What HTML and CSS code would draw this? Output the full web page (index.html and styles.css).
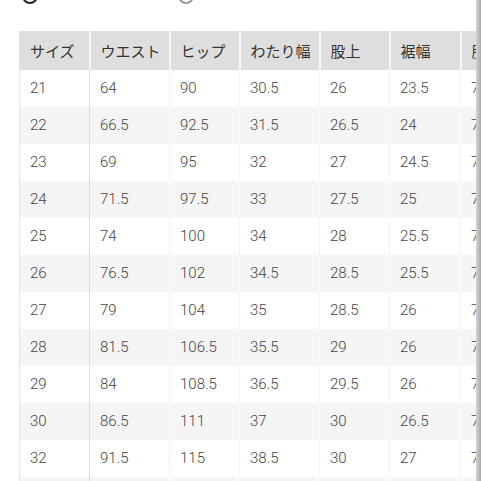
FILE: index.html
```html
<!DOCTYPE html>
<html lang="ja">
<head>
<meta charset="utf-8">
<link rel="stylesheet" href="styles.css">
</head>
<body>
<div class="page">
  <div class="content">
    <div class="radios">
      <div class="radio"><span class="dot on"></span><span class="rlabel">cm</span></div>
      <div class="radio second"><span class="dot"></span><span class="rlabel">inch</span></div>
    </div>
    <div class="table-wrap">
      <table class="sizes">
        <colgroup>
          <col class="c1"><col class="c2"><col class="c3"><col class="c4"><col class="c5"><col class="c6"><col class="c7">
        </colgroup>
        <thead>
          <tr><th>サイズ</th><th>ウエスト</th><th>ヒップ</th><th>わたり幅</th><th>股上</th><th>裾幅</th><th>股下</th></tr>
        </thead>
        <tbody>
          <tr><td>21</td><td>64</td><td>90</td><td>30.5</td><td>26</td><td>23.5</td><td>76</td></tr>
          <tr><td>22</td><td>66.5</td><td>92.5</td><td>31.5</td><td>26.5</td><td>24</td><td>76</td></tr>
          <tr><td>23</td><td>69</td><td>95</td><td>32</td><td>27</td><td>24.5</td><td>76</td></tr>
          <tr><td>24</td><td>71.5</td><td>97.5</td><td>33</td><td>27.5</td><td>25</td><td>76</td></tr>
          <tr><td>25</td><td>74</td><td>100</td><td>34</td><td>28</td><td>25.5</td><td>76</td></tr>
          <tr><td>26</td><td>76.5</td><td>102</td><td>34.5</td><td>28.5</td><td>25.5</td><td>76</td></tr>
          <tr><td>27</td><td>79</td><td>104</td><td>35</td><td>28.5</td><td>26</td><td>76</td></tr>
          <tr><td>28</td><td>81.5</td><td>106.5</td><td>35.5</td><td>29</td><td>26</td><td>76</td></tr>
          <tr><td>29</td><td>84</td><td>108.5</td><td>36.5</td><td>29.5</td><td>26</td><td>76</td></tr>
          <tr><td>30</td><td>86.5</td><td>111</td><td>37</td><td>30</td><td>26.5</td><td>76</td></tr>
          <tr><td>32</td><td>91.5</td><td>115</td><td>38.5</td><td>30</td><td>27</td><td>76</td></tr>
          <tr><td>34</td><td>96.5</td><td>119</td><td>40</td><td>31</td><td>27.5</td><td>76</td></tr>
        </tbody>
      </table>
    </div>
  </div>
  <div class="scrollbar"></div>
</div>
</body>
</html>
```

FILE: styles.css
```css
html, body {
  margin: 0;
  padding: 0;
  background: #fff;
  overflow: hidden;
}
body {
  font-family: Roboto, "Noto Sans CJK JP", sans-serif;
  color: #444;
  width: 481px;
  height: 481px;
}
.page {
  display: flex;
  width: 481px;
  height: 481px;
  overflow: hidden;
}
.content {
  flex: 1;
  min-width: 0;
  overflow: hidden;
}
.scrollbar {
  width: 5px;
  flex: none;
  background: linear-gradient(to right, #d4d4d4, #a8a8a8);
}
.radios {
  display: flex;
  height: 5px;
  margin-top: -7px;
  padding-left: 22px;
  margin-bottom: 33px;
}
.radio {
  display: flex;
  align-items: center;
  width: 156px;
}
.radio.second {
  width: auto;
}
.dot {
  width: 12px;
  height: 12px;
  border: 2px solid #222;
  border-radius: 50%;
  flex: none;
}
.radio.second .dot {
  border-color: #999;
}
.rlabel {
  margin-left: 20px;
  font-size: 13px;
  color: #ddd;
}
.table-wrap {
  padding-left: 19px;
}
.sizes {
  border-collapse: collapse;
  table-layout: fixed;
  width: 541px;
  border-left: 1px solid #e6e6e6;
  font-size: 15px;
}
.c1 { width: 70px; }
.c2 { width: 80px; }
.c3 { width: 70px; }
.c4 { width: 80px; }
.c5 { width: 70px; }
.c6 { width: 71px; }
.c7 { width: 100px; }
.sizes th {
  background: #dedede;
  color: #333;
  font-weight: normal;
  text-align: left;
  height: 39px;
  padding: 0 0 0 10px;
  border-right: 2px solid #f6f6f6;
  box-sizing: border-box;
  white-space: nowrap;
}
.sizes td {
  height: 37px;
  padding: 0 0 0 10px;
  box-sizing: border-box;
  border-right: 1px solid #f2f2f2;
  white-space: nowrap;
  line-height: 1;
  font-weight: 300;
}
.sizes td:first-child {
  border-right: 1px solid #dcdcdc;
}
.sizes tbody tr:nth-child(even) td {
  background: #f5f5f5;
  border-right-color: #fbfbfb;
}
.sizes tbody tr:nth-child(even) td:first-child {
  border-right-color: #dcdcdc;
}
```
